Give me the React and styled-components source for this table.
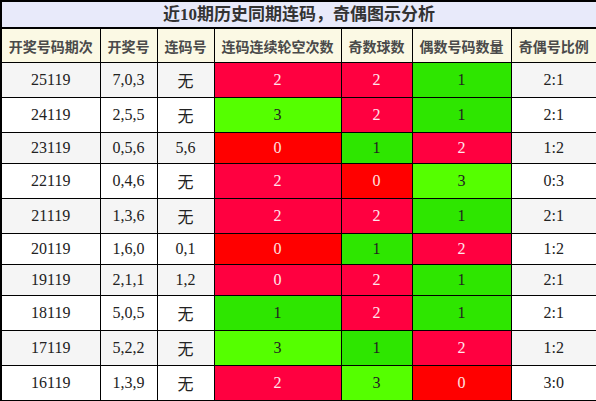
import React from "react";
import styled, { createGlobalStyle } from "styled-components";

const Global = createGlobalStyle`
  html, body { margin: 0; padding: 0; background: #fff; }
  body { font-family: "Liberation Serif", "Noto Sans CJK SC", serif; }
`;

const Table = styled.table`
  width: 596px;
  border-collapse: collapse;
  border: 2px solid #000;
  font-family: "Liberation Serif", "Noto Sans CJK SC", serif;
  font-size: 16px;
  table-layout: fixed;
`;

const Title = styled.th`
  background: #e8eafa;
  color: #333;
  font-size: 17px;
  font-weight: bold;
  height: 25px;
  padding: 0;
  line-height: 25px;
  border-bottom: 2px solid #000;
  text-align: center;
`;

const Head = styled.th`
  background: #fbf9e4;
  color: #4a4a4a;
  font-family: "Noto Sans CJK SC", sans-serif;
  font-weight: bold;
  font-size: 14px;
  height: 33px;
  padding: 0;
  border: 1px solid #000;
  text-align: center;
`;

const palette = {
  pink: { bg: "#ff0040", fg: "#ffe6ec" },
  red: { bg: "#ff0000", fg: "#ffe0e0" },
  green: { bg: "#2ee600", fg: "#222" },
  lime: { bg: "#55ff00", fg: "#222" },
};

const Cell = styled.td`
  border: 1px solid #000;
  text-align: center;
  padding: 6px 0;
  line-height: 18px;
  color: #222;
  background: ${(p) => (p.$tone ? palette[p.$tone].bg : p.$alt ? "#f5f5f5" : "#fff")};
  ${(p) => p.$tone && `color: ${palette[p.$tone].fg};`}
`;

const Wu = styled.span`
  font-family: "Noto Sans CJK SC", sans-serif;
  font-size: 16px;
  line-height: 22px;
  display: inline-block;
  vertical-align: middle;
`;

const rows = [
  ["25119", "7,0,3", null, ["2", "pink"], ["2", "pink"], ["1", "green"], "2:1"],
  ["24119", "2,5,5", null, ["3", "lime"], ["2", "pink"], ["1", "green"], "2:1"],
  ["23119", "0,5,6", "5,6", ["0", "red"], ["1", "green"], ["2", "pink"], "1:2"],
  ["22119", "0,4,6", null, ["2", "pink"], ["0", "red"], ["3", "lime"], "0:3"],
  ["21119", "1,3,6", null, ["2", "pink"], ["2", "pink"], ["1", "green"], "2:1"],
  ["20119", "1,6,0", "0,1", ["0", "red"], ["1", "green"], ["2", "pink"], "1:2"],
  ["19119", "2,1,1", "1,2", ["0", "pink"], ["2", "pink"], ["1", "green"], "2:1"],
  ["18119", "5,0,5", null, ["1", "green"], ["2", "pink"], ["1", "green"], "2:1"],
  ["17119", "5,2,2", null, ["3", "lime"], ["1", "green"], ["2", "pink"], "1:2"],
  ["16119", "1,3,9", null, ["2", "pink"], ["3", "lime"], ["0", "red"], "3:0"],
];

const widths = [99, 57, 57, 127, 71, 99, 86];
const heads = ["开奖号码期次", "开奖号", "连码号", "连码连续轮空次数", "奇数球数", "偶数号码数量", "奇偶号比例"];

export default function App() {
  return (
    <>
      <Global />
      <Table>
        <colgroup>
          {widths.map((w, i) => (
            <col key={i} style={{ width: w }} />
          ))}
        </colgroup>
        <thead>
          <tr>
            <Title colSpan={7}>近10期历史同期连码，奇偶图示分析</Title>
          </tr>
          <tr>
            {heads.map((h) => (
              <Head key={h}>{h}</Head>
            ))}
          </tr>
        </thead>
        <tbody>
          {rows.map((r, i) => {
            const alt = i % 2 === 0;
            return (
              <tr key={r[0]}>
                <Cell $alt={alt}>{r[0]}</Cell>
                <Cell $alt={alt}>{r[1]}</Cell>
                <Cell $alt={alt}>{r[2] ? r[2] : <Wu>无</Wu>}</Cell>
                <Cell $tone={r[3][1]}>{r[3][0]}</Cell>
                <Cell $tone={r[4][1]}>{r[4][0]}</Cell>
                <Cell $tone={r[5][1]}>{r[5][0]}</Cell>
                <Cell $alt={alt}>{r[6]}</Cell>
              </tr>
            );
          })}
        </tbody>
      </Table>
    </>
  );
}
